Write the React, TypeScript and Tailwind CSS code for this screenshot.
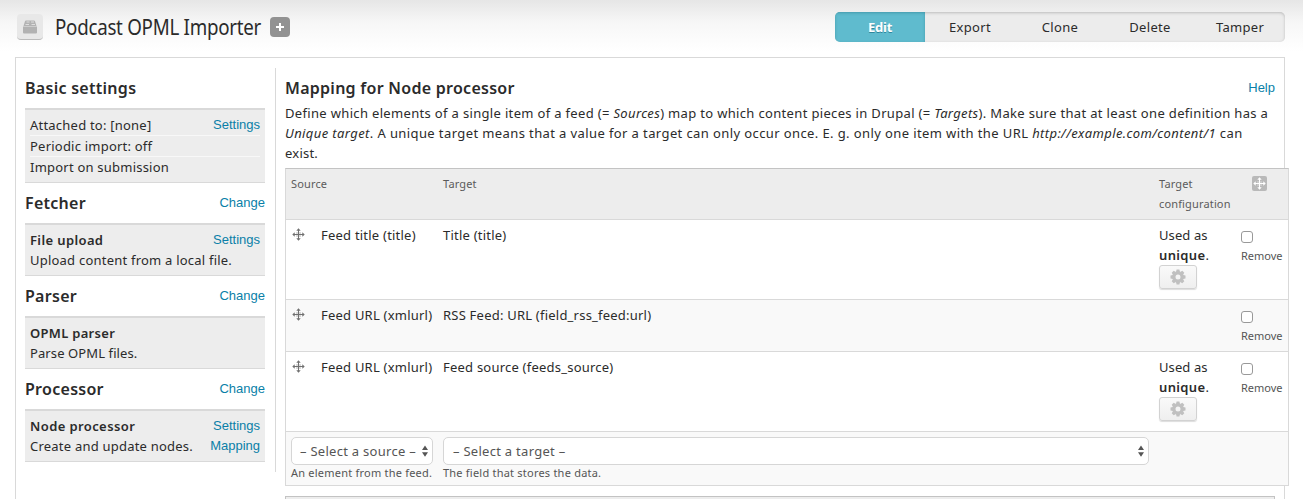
import type { ReactNode } from "react";

const tabs = ["Export", "Clone", "Delete", "Tamper"];

function Move({ className }: { className: string }) {
  return (
    <svg viewBox="0 0 13 13" className={className} fill="currentColor">
      <path d="M6 1h1v11H6zM1 6h11v1H1z" />
      <path d="M4.300 2.700 6.500.3l2.200 2.400zM4.300 10.300l2.200 2.400 2.200-2.400zM2.700 4.300.3 6.500l2.400 2.200zM10.300 4.300l2.400 2.200-2.400 2.200z" />
      <path d="M4 4h5v5H4z" opacity="0.25" />
    </svg>
  );
}

function Gear() {
  return (
    <svg viewBox="-8 -8 16 16" className="h-4 w-4 text-[#c0c0c0]">
      <circle r="4.1" fill="none" stroke="currentColor" strokeWidth="3.2" />
      {[0, 45, 90, 135, 180, 225, 270, 315].map((a) => (
        <path key={a} d="M-2-5 -1.400-7.500H1.400L2-5z" fill="currentColor" transform={`rotate(${a})`} />
      ))}
    </svg>
  );
}

function Arrows() {
  return (
    <svg viewBox="0 0 6 12" className="h-3 w-1.5 shrink-0 text-[#555]" fill="currentColor">
      <path d="M0 5 3 .5 6 5zM0 7.200h6L3 11.700z" />
    </svg>
  );
}

function Link({ children }: { children: ReactNode }) {
  return (
    <a className="font-['Liberation_Sans',sans-serif] text-[13px] leading-5 tracking-normal text-[#0a7fa8]">{children}</a>
  );
}

function Heading({ title, change = true }: { title: string; change?: boolean }) {
  return (
    <div className="flex h-10 items-center justify-between">
      <h2 className="text-base font-semibold tracking-[0.28px]">{title}</h2>
      {change && <Link>Change</Link>}
    </div>
  );
}

function Box({ children, links }: { children: ReactNode; links: string[] }) {
  return (
    <div className="grid grid-cols-1 border-t-2 border-b border-[#d9d9d9] bg-[#ededed] p-[5px]">
      <div className="col-start-1 row-start-1 whitespace-nowrap">{children}</div>
      <div className="col-start-1 row-start-1 flex flex-col items-end">
        {links.map((l) => (
          <Link key={l}>{l}</Link>
        ))}
      </div>
    </div>
  );
}

const cols = "grid grid-cols-[152px_716px_82px_1fr]";

function Row({ source, target, unique, alt }: { source: string; target: string; unique?: boolean; alt?: boolean }) {
  return (
    <div className={`${cols} border-b border-[#d9d9d9] ${unique ? "h-20" : "h-[52px]"} ${alt ? "bg-[#f9f9f9]" : "bg-white"}`}>
      <div className="flex pt-[5px] pl-1.5">
        <Move className="mt-[3px] h-[13px] w-[13px] text-[#707070]" />
        <span className="ml-4 whitespace-nowrap">{source}</span>
      </div>
      <div className="px-[5px] pt-[5px]">{target}</div>
      <div className="px-[5px] pt-[5px]">
        {unique && (
          <>
            <div className="tracking-[0.1px]">Used as</div>
            <div>
              <strong className="font-semibold tracking-[0.35px]">unique</strong>.
            </div>
            <button className="flex h-[24px] w-[38px] items-center justify-center rounded-[3px] border border-[#d2d2d2] bg-linear-to-b from-[#fafafa] to-[#efefef] shadow-[0_1px_1px_#ddd]">
              <Gear />
            </button>
          </>
        )}
      </div>
      <div className="px-[5px] pt-[11px]">
        <div className="h-3 w-3 rounded-[3px] border border-[#999] bg-white" />
        <div className="mt-[3px] text-[11px] leading-5 tracking-normal text-[#555]">Remove</div>
      </div>
    </div>
  );
}

export default function App() {
  return (
    <div className="flex h-[499px] w-[1303px] flex-col overflow-hidden bg-white font-['Noto_Sans','Lucida_Grande',sans-serif] text-[13px] leading-5 tracking-[0.22px] text-[#2b2b2b]">
      <header className="flex h-[57px] shrink-0 items-start bg-linear-to-b from-[#e6e6e6] via-[#f7f7f7] via-40% to-white to-90% pr-[18px] pl-[17px]">
        <div className="mt-[14px] flex h-[26px] w-[26px] items-center justify-center rounded-[4px] border-b border-[#bbb] bg-[#e8e8e8]">
          <svg viewBox="0 0 14 14" className="h-3.5 w-3.5" fill="#b2b2b2">
            <path d="M3 .5h8q.8 0 1 .8L13.500 6H.5L2 1.300Q2.200.5 3 .5zM0 6.500h14v6q0 1-1 1H1q-1 0-1-1z" />
            <path d="M3.500 1.500h3v1h-3zM8 1.500h3v1H8zM2.500 4h3.500v1H2.500zM8.500 4H12v1H8.500z" fill="#dedede" />
          </svg>
        </div>
        <h1 className="mt-[12px] ml-3 w-[206px] origin-left scale-x-[0.893] text-[21px] leading-[30px] tracking-[-0.3px] whitespace-nowrap">Podcast OPML Importer</h1>
        <div className="mt-[17px] ml-[9px] flex h-5 w-5 items-center justify-center rounded-[4px] bg-[#929292]">
          <svg viewBox="0 0 8 8" className="h-2 w-2" stroke="white" strokeWidth="2">
            <path d="M4 0v8M0 4h8" />
          </svg>
        </div>
        <nav className="mt-3 ml-auto flex h-[30px] overflow-hidden rounded-[5px] bg-[#ececec] text-center leading-[30px] tracking-[0.3px] shadow-[inset_0_1px_3px_#bbb]">
          <a className="w-[90px] bg-[#5fbbce] font-bold tracking-[-0.2px] text-white shadow-[inset_0_1px_3px_#4498aa] [text-shadow:0_1px_0_#2f879b]">Edit</a>
          {tabs.map((t) => (
            <a key={t} className="w-[90px]">{t}</a>
          ))}
        </nav>
      </header>
      <main className="mr-[18px] ml-[15px] flex grow items-start border border-b-0 border-[#d9d9d9] pt-[10px] pl-[9px]">
        <aside className="h-[404px] w-[251px] shrink-0 border-r border-[#d9d9d9] pr-[10px]">
          <Heading title="Basic settings" change={false} />
          <Box links={["Settings"]}>
            <div className="border-b border-[#f8f8f8]">Attached to: [none]</div>
            <div className="border-b border-[#f8f8f8]">Periodic import: off</div>
            <div>Import on submission</div>
          </Box>
          <Heading title="Fetcher" />
          <Box links={["Settings"]}>
            <div className="font-semibold tracking-[0.38px]">File upload</div>
            <div>Upload content from a local file.</div>
          </Box>
          <Heading title="Parser" />
          <Box links={[]}>
            <div className="font-semibold tracking-[0.3px]">OPML parser</div>
            <div className="tracking-[0.1px]">Parse OPML files.</div>
          </Box>
          <Heading title="Processor" />
          <Box links={["Settings", "Mapping"]}>
            <div className="font-semibold tracking-[0.4px]">Node processor</div>
            <div>Create and update nodes.</div>
          </Box>
        </aside>
        <section className="ml-[9px] w-[1004px] shrink-0">
          <div className="flex h-[35px] items-center justify-between pr-[14px]">
            <h2 className="mt-[5px] text-base font-semibold tracking-[0.27px]">Mapping for Node processor</h2>
            <span className="mt-[3px]"><Link>Help</Link></span>
          </div>
          <p className="h-[65px] whitespace-nowrap">
            <span className="tracking-[0.334px]">Define which elements of a single item of a feed (= <em>Sources</em>) map to which content pieces in Drupal (= <em>Targets</em>). Make sure that at least one definition has a</span><br />
            <span className="tracking-[0.395px]"><em>Unique target</em>. A unique target means that a value for a target can only occur once. E. g. only one item with the URL <em>http://example.com/content/1</em> can</span><br />
            exist.
          </p>
          <div className="relative border border-b-0 border-[#d9d9d9] border-t-[#c3c3c3]">
            <div className={`${cols} h-[51px] border-b border-[#d9d9d9] bg-[#ededed] pt-[5px] text-[11px] tracking-[0.15px] text-[#5b5b5b]`}>
              <div className="pl-[5px]">Source</div>
              <div className="pl-[5px]">Target</div>
              <div className="pl-[5px]">Target configuration</div>
              <div className="mt-[2px] ml-4 flex h-[15px] w-[15px] items-center justify-center rounded-[2px] bg-[#b9b9b9]">
                <Move className="h-[13px] w-[13px] text-white" />
              </div>
            </div>
            <Row source="Feed title (title)" target="Title (title)" unique />
            <Row source="Feed URL (xmlurl)" target="RSS Feed: URL (field_rss_feed:url)" alt />
            <Row source="Feed URL (xmlurl)" target="Feed source (feeds_source)" unique />
            <div className={`${cols} h-[54px] border-b border-[#d9d9d9] bg-[#f9f9f9] text-[#555]`}>
              <div className="px-[5px] pt-[5px]">
                <div className="flex h-7 items-center justify-between rounded-[5px] border border-[#d6d6d6] bg-white pr-1 pl-[8px] tracking-[0.28px] whitespace-nowrap">
                  – Select a source –<Arrows />
                </div>
                <div className="-mt-0.5 text-[11px] whitespace-nowrap">An element from the feed.</div>
              </div>
              <div className="px-[5px] pt-[5px]">
                <div className="flex h-7 items-center justify-between rounded-[5px] border border-[#d6d6d6] bg-white pr-1 pl-[9px] tracking-[0.28px]">
                  – Select a target –<Arrows />
                </div>
                <div className="-mt-0.5 text-[11px]">The field that stores the data.</div>
              </div>
            </div>
          </div>
          <div className="mt-[10px] h-5 w-[990px] border border-[#c3c3c3] bg-[#ededed]" />
        </section>
      </main>
    </div>
  );
}
